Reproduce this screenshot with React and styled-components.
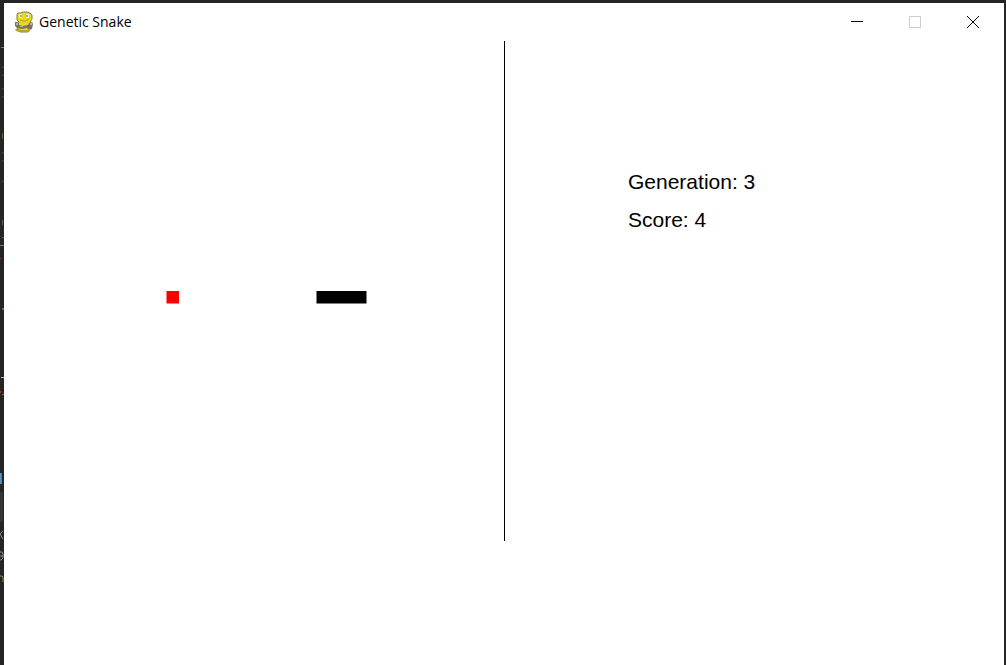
import React from "react";
import styled, { createGlobalStyle } from "styled-components";

const GlobalStyle = createGlobalStyle`
  * { box-sizing: border-box; }
  html, body, #root { height: 100%; margin: 0; }
  body { background: #272524; overflow: hidden; }
`;

const Desktop = styled.div`
  display: flex;
  min-height: 100%;
  padding: 3px 2px 0 0;
`;

const EditorEdge = styled.svg`
  flex: none;
  display: block;
  width: 4px;
  height: 600px;
`;

const Window = styled.main`
  flex: 1;
  display: flex;
  flex-direction: column;
  background: #fff;
`;

const TitleBar = styled.header`
  display: flex;
  align-items: center;
  height: 38px;
  padding: 0 2px 0 10px;
`;

const AppIcon = styled.svg`
  width: 20px;
  height: 22px;
  margin-right: 5px;
`;

const Title = styled.h1`
  flex: 1;
  margin: 0;
  font: 400 14px/20px "Open Sans", "Noto Sans", sans-serif;
  color: #000;
`;

const WindowButton = styled.button`
  display: flex;
  align-items: center;
  justify-content: center;
  width: 58px;
  height: 38px;
  padding: 0;
  border: 0;
  background: transparent;
  color: #000;
  &:disabled { color: #ccc; }
`;

const Glyph = styled.svg`
  width: 12px;
  height: 12px;
  fill: none;
  stroke: currentColor;
`;

const Game = styled.section`
  display: flex;
  align-items: flex-start;
`;

const Board = styled.svg`
  display: block;
  width: 50%;
  aspect-ratio: 1;
`;

const Divider = styled.div`
  align-self: stretch;
  width: 1px;
  background: #000;
`;

const Stats = styled.div`
  flex: 1;
  padding: 122px 0 0 123px;
`;

const Stat = styled.p`
  margin: 0;
  font: 400 21px/38px "Liberation Sans", Arial, sans-serif;
  color: #000;
`;

const food = { x: 13, y: 20 };
const snake = [25, 26, 27, 28].map((x) => ({ x, y: 20 }));

const editorMarks = [
  { y: 44, x: 1, w: 3, h: 1, color: "#6f7f80" },
  { y: 64, x: 2, w: 2, h: 1, color: "#49437a" },
  { y: 72, x: 2, w: 2, h: 1, color: "#49437a" },
  { y: 85, x: 2, w: 2, h: 1, color: "#49437a" },
  { y: 93, x: 2, w: 2, h: 1, color: "#49437a" },
  { y: 130, x: 2, w: 1, h: 6, color: "#56614f" },
  { y: 149, x: 2, w: 2, h: 1, color: "#49437a" },
  { y: 157, x: 2, w: 2, h: 1, color: "#49437a" },
  { y: 178, x: 2, w: 2, h: 1, color: "#49437a" },
  { y: 217, x: 2, w: 1, h: 5, color: "#56614f" },
  { y: 234, x: 2, w: 2, h: 1, color: "#666" },
  { y: 242, x: 0, w: 4, h: 1, color: "#8f7b54" },
  { y: 255, x: 0, w: 1, h: 1, color: "#a43a20" },
  { y: 305, x: 2, w: 2, h: 2, color: "#77643a" },
  { y: 374, x: 1, w: 3, h: 1, color: "#d8bd7a" },
  { y: 388, x: 0, w: 1, h: 2, color: "#a63b30" },
  { y: 391, x: 2, w: 2, h: 1, color: "#906530" },
  { y: 470, x: 0, w: 1, h: 11, color: "#5e91c2" },
  { y: 470, x: 1, w: 1, h: 11, color: "#806d5b" },
  { y: 489, x: 0, w: 3, h: 30, color: "#333536" },
];

export default function App() {
  return (
    <>
      <GlobalStyle />
      <Desktop>
        <EditorEdge viewBox="0 0 4 600" shapeRendering="crispEdges" aria-hidden="true">
          {editorMarks.map((m) => (
            <rect key={`${m.x}-${m.y}`} x={m.x} y={m.y} width={m.w} height={m.h} fill={m.color} />
          ))}
          <g fill="none" stroke="#8b9188" shapeRendering="auto">
            <path d="M0 531l3-3M0 531l3 5" />
            <path d="M0 549h2l1 2v4l-2 2H0M0 553h3" />
            <path d="M0 573h2l1 1v5" stroke="#8f8b60" />
          </g>
        </EditorEdge>
        <Window>
          <TitleBar>
            <AppIcon viewBox="0 0 20 22" aria-hidden="true">
              <path d="M3 3l1-1h3l2-1h4l3 1 2 2v4l-2 3 1 2-1 5-2 3H6l-3-2 1-5 1-3-2-2z" fill="#e9d916" stroke="#86803c" />
              <path d="M5 3h3v4H5zM12 3h3v4h-3z" fill="#f4f4ec" />
              <path d="M6 4h2v2H6zM12 4h2v2h-2z" fill="#a5aaa5" />
              <path d="M6 9l3 1h3l3-2" fill="none" stroke="#b79b10" />
              <path d="M1 11h3l1 3 4 1 5-1 1-2 3-1 1 2-1 5-3 1-2-2-5 1-5-1-2-2z" fill="#74746f" />
              <path d="M2 12h2v2H2zM6 15h3v1H6zM16 12h2v2h-2z" fill="#b5b5ae" />
              <path d="M13 14h2v2h-2z" fill="#a95b4c" />
              <path d="M1 18h4l2 1h6l3-1v2l-2 1H5l-3-1z" fill="#b3a71d" />
            </AppIcon>
            <Title>Genetic Snake</Title>
            <WindowButton aria-label="Minimize">
              <Glyph viewBox="0 0 12 12"><path d="M0 5.5h12" /></Glyph>
            </WindowButton>
            <WindowButton aria-label="Maximize" disabled>
              <Glyph viewBox="0 0 12 12"><path d="M.5.5h11v11H.5z" /></Glyph>
            </WindowButton>
            <WindowButton aria-label="Close">
              <Glyph viewBox="0 0 12 12"><path d="M0 0l12 12m0-12L0 12" /></Glyph>
            </WindowButton>
          </TitleBar>
          <Game>
            <Board viewBox="0 0 40 40" role="img" aria-label="Snake board">
              <rect x={food.x} y={food.y} width="1" height="1" fill="#f00" />
              <rect x={snake[0].x} y={snake[0].y} width={snake.length} height="1" fill="#000" />
            </Board>
            <Divider />
            <Stats>
              <Stat>Generation: 3</Stat>
              <Stat>Score: 4</Stat>
            </Stats>
          </Game>
        </Window>
      </Desktop>
    </>
  );
}
